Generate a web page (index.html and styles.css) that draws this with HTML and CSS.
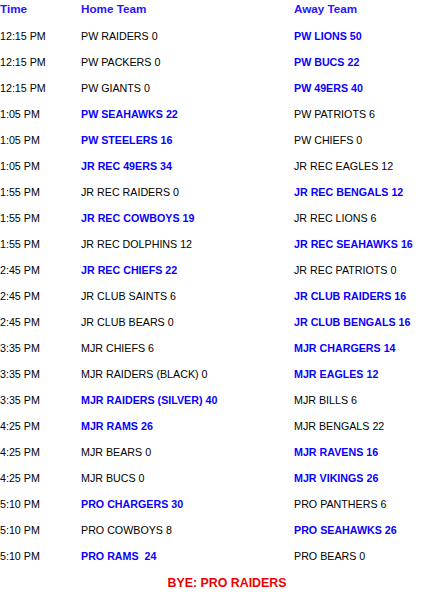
FILE: index.html
```html
<!DOCTYPE html>
<html>
<head>
<meta charset="utf-8">
<link rel="stylesheet" href="styles.css">
</head>
<body>
<div class="schedule">
  <div class="row head"><span>Time</span><span>Home Team</span><span>Away Team</span></div>
  <div class="row"><span>12:15 PM</span><span>PW RAIDERS 0</span><span class="win">PW LIONS 50</span></div>
  <div class="row"><span>12:15 PM</span><span>PW PACKERS 0</span><span class="win">PW BUCS 22</span></div>
  <div class="row"><span>12:15 PM</span><span>PW GIANTS 0</span><span class="win">PW 49ERS 40</span></div>
  <div class="row"><span>1:05 PM</span><span class="win">PW SEAHAWKS 22</span><span>PW PATRIOTS 6</span></div>
  <div class="row"><span>1:05 PM</span><span class="win">PW STEELERS 16</span><span>PW CHIEFS 0</span></div>
  <div class="row"><span>1:05 PM</span><span class="win">JR REC 49ERS 34</span><span>JR REC EAGLES 12</span></div>
  <div class="row"><span>1:55 PM</span><span>JR REC RAIDERS 0</span><span class="win">JR REC BENGALS 12</span></div>
  <div class="row"><span>1:55 PM</span><span class="win">JR REC COWBOYS 19</span><span>JR REC LIONS 6</span></div>
  <div class="row"><span>1:55 PM</span><span>JR REC DOLPHINS 12</span><span class="win">JR REC SEAHAWKS 16</span></div>
  <div class="row"><span>2:45 PM</span><span class="win">JR REC CHIEFS 22</span><span>JR REC PATRIOTS 0</span></div>
  <div class="row"><span>2:45 PM</span><span>JR CLUB SAINTS 6</span><span class="win">JR CLUB RAIDERS 16</span></div>
  <div class="row"><span>2:45 PM</span><span>JR CLUB BEARS 0</span><span class="win">JR CLUB BENGALS 16</span></div>
  <div class="row"><span>3:35 PM</span><span>MJR CHIEFS 6</span><span class="win">MJR CHARGERS 14</span></div>
  <div class="row"><span>3:35 PM</span><span>MJR RAIDERS (BLACK) 0</span><span class="win">MJR EAGLES 12</span></div>
  <div class="row"><span>3:35 PM</span><span class="win">MJR RAIDERS (SILVER) 40</span><span>MJR BILLS 6</span></div>
  <div class="row"><span>4:25 PM</span><span class="win">MJR RAMS 26</span><span>MJR BENGALS 22</span></div>
  <div class="row"><span>4:25 PM</span><span>MJR BEARS 0</span><span class="win">MJR RAVENS 16</span></div>
  <div class="row"><span>4:25 PM</span><span>MJR BUCS 0</span><span class="win">MJR VIKINGS 26</span></div>
  <div class="row"><span>5:10 PM</span><span class="win">PRO CHARGERS 30</span><span>PRO PANTHERS 6</span></div>
  <div class="row"><span>5:10 PM</span><span>PRO COWBOYS 8</span><span class="win">PRO SEAHAWKS 26</span></div>
  <div class="row"><span>5:10 PM</span><span class="win">PRO RAMS&nbsp; 24</span><span>PRO BEARS 0</span></div>
  <div class="bye">BYE: PRO RAIDERS</div>
</div>
</body>
</html>
```
FILE: styles.css
```css
html, body {
  margin: 0;
  padding: 0;
  background: #ffffff;
}
.schedule {
  font-family: "Liberation Sans", Arial, sans-serif;
  font-size: 10.7px;
  color: #000000;
  width: 448px;
}
.row {
  display: grid;
  grid-template-columns: 81px 213px 1fr;
  height: 26px;
  line-height: 26px;
  white-space: nowrap;
}
.row.head {
  height: 23px;
  line-height: 17px;
  font-size: 11.7px;
  font-weight: bold;
  color: #2a14ff;
}
.win {
  font-weight: bold;
  color: #0a00ff;
}
.bye {
  height: 28px;
  line-height: 28px;
  padding-left: 6px;
  text-align: center;
  font-weight: bold;
  font-size: 12.4px;
  color: #ee0000;
}
```
